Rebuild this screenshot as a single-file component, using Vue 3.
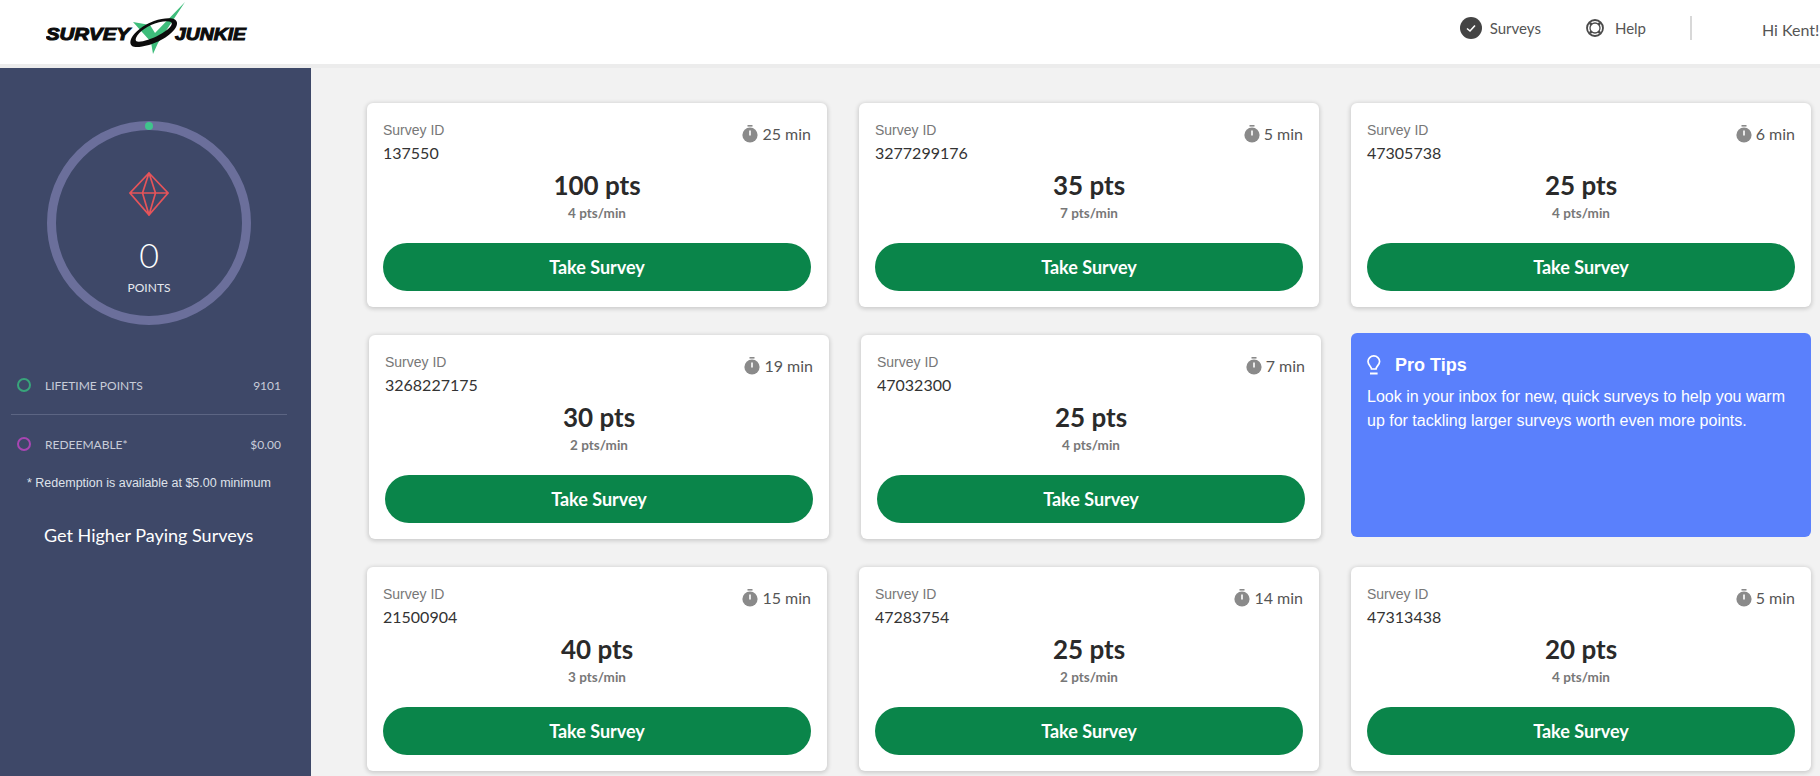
<script setup>
const surveys = [
  { id: '137550', time: 25, pts: 100, rate: 4 },
  { id: '3277299176', time: 5, pts: 35, rate: 7 },
  { id: '47305738', time: 6, pts: 25, rate: 4 },
  { id: '3268227175', time: 19, pts: 30, rate: 2, nudged: true },
  { id: '47032300', time: 7, pts: 25, rate: 4, nudged: true },
  { tip: true },
  { id: '21500904', time: 15, pts: 40, rate: 3 },
  { id: '47283754', time: 14, pts: 25, rate: 2 },
  { id: '47313438', time: 5, pts: 20, rate: 4 },
]
</script>

<template>
  <div class="page">
    <header class="topbar">
      <svg class="logo" width="204" height="56" viewBox="0 0 204 56">
        <path class="logo-check" d="M87 22 L104 25 L109 33 L139 2 L112 43 L107 54 L105 42 Z" />
        <path class="logo-swoosh" fill-rule="evenodd" d="M86 46 C80 40 92 27 108 21 C120 17 132 17 131 24 C130 32 116 41 103 45 C95 47 89 48 86 46 Z M90 41 C93 43 104 40 113 35 C122 30 128 25 125 22 C121 20 112 22 105 25 C96 29 88 37 90 41 Z" />
        <text class="logo-text" x="0" y="40" textLength="84" lengthAdjust="spacingAndGlyphs">SURVEY</text>
        <text class="logo-text" x="129" y="40" textLength="71" lengthAdjust="spacingAndGlyphs">JUNKIE</text>
      </svg>
      <nav class="nav">
        <a class="nav-item surveys-link">
          <svg width="22" height="22" viewBox="0 0 22 22">
            <circle cx="11" cy="11" r="11" fill="#444" />
            <path d="M7 11.5 L10 14 L15 8.5" fill="none" stroke="#fff" stroke-width="1.6" />
          </svg>
          Surveys
        </a>
        <a class="nav-item help-link">
          <svg width="18" height="18" viewBox="0 0 18 18">
            <circle cx="9" cy="9" r="8" fill="none" stroke="#4a4a4a" stroke-width="1.8" />
            <circle cx="9" cy="9" r="5" fill="none" stroke="#4a4a4a" stroke-width="1.3" />
            <path d="M3.8 3.8 L5.5 5.5 M14.2 3.8 L12.5 5.5 M3.8 14.2 L5.5 12.5 M14.2 14.2 L12.5 12.5" stroke="#4a4a4a" stroke-width="2.6" />
          </svg>
          Help
        </a>
        <span class="nav-sep"></span>
        <span class="greeting">Hi Kent!</span>
      </nav>
    </header>

    <div class="body">
      <aside class="sidebar">
        <div class="ring">
          <span class="ring-dot"></span>
          <svg class="gem" width="40" height="44" viewBox="0 0 40 44">
            <path d="M20 1 L39 21 L20 43 L1 21 Z M1 21 H39 M20 1 L13.5 21 L20 43 L26.5 21 Z" fill="none" stroke="#e5545a" stroke-width="1.7" />
          </svg>
          <div class="points-num">0</div>
          <div class="points-label">POINTS</div>
        </div>

        <div class="stat">
          <span class="stat-dot green"></span>
          <span class="stat-label">LIFETIME POINTS</span>
          <span class="stat-value">9101</span>
        </div>
        <div class="stat-sep"></div>
        <div class="stat">
          <span class="stat-dot purple"></span>
          <span class="stat-label">REDEEMABLE*</span>
          <span class="stat-value">$0.00</span>
        </div>
        <p class="note">* Redemption is available at $5.00 minimum</p>
        <p class="higher">Get Higher Paying Surveys</p>
      </aside>

      <main class="grid">
        <template v-for="s in surveys" :key="s.id || 'tip'">
          <section v-if="s.tip" class="tip">
            <h3 class="tip-title">
              <svg width="14" height="20" viewBox="0 0 14 20">
                <path d="M4.5 14 C4.5 11.5 1 10 1 6.5 A5.8 5.6 0 0 1 12.6 6.5 C12.6 10 9 11.5 9 14 Z" fill="none" stroke="#fff" stroke-width="1.7" />
                <path d="M3 18.5 H10.6" stroke="#fff" stroke-width="2" />
              </svg>
              Pro Tips
            </h3>
            <p class="tip-text">Look in your inbox for new, quick surveys to help you warm up for tackling larger surveys worth even more points.</p>
          </section>
          <section v-else class="card" :class="{ nudged: s.nudged }">
            <div class="card-top">
              <div>
                <div class="id-label">Survey ID</div>
                <div class="id-value">{{ s.id }}</div>
              </div>
              <div class="time">
                <svg width="16" height="18" viewBox="0 0 16 18">
                  <rect x="5.5" y="0" width="5" height="1.6" fill="#8a8a8a" />
                  <circle cx="8" cy="10" r="7.6" fill="#8a8a8a" />
                  <rect x="7.2" y="5.5" width="1.6" height="5" fill="#fff" />
                </svg>
                {{ s.time }} min
              </div>
            </div>
            <div class="pts">{{ s.pts }} pts</div>
            <div class="rate">{{ s.rate }} pts/min</div>
            <button class="take">Take Survey</button>
          </section>
        </template>
      </main>
    </div>
  </div>
</template>

<style>
html, body { margin: 0; overflow: hidden; }
</style>

<style scoped>
.page {
  height: 776px;
  overflow: hidden;
  background: #f2f2f2;
  font-family: Lato, "Liberation Sans", sans-serif;
  display: flex;
  flex-direction: column;
}
.topbar {
  height: 64px;
  flex: none;
  background: #fff;
  border-bottom: 4px solid #ececec;
  display: flex;
  align-items: flex-start;
  justify-content: space-between;
  padding-left: 46px;
  overflow: hidden;
}
.logo-check { fill: #3ebd7b; }
.logo-swoosh { fill: #0c0c0c; }
.logo-text {
  font-family: "Liberation Sans", sans-serif;
  font-weight: 700;
  font-style: italic;
  font-size: 17px;
  fill: #0c0c0c;
  stroke: #0c0c0c;
  stroke-width: 1;
}
.nav {
  display: flex;
  align-items: center;
  height: 56px;
  color: #555;
  font-size: 15px;
  white-space: nowrap;
}
.nav-item { display: flex; align-items: center; gap: 8px; }
.help-link { margin-left: 45px; gap: 11px; }
.nav-sep { width: 2px; height: 24px; background: #d8d8d8; margin-left: 44px; }
.greeting { margin-left: 70px; width: 58px; font-size: 16px; position: relative; top: 1px; }

.body { flex: 1; display: flex; min-height: 0; }
.sidebar {
  width: 311px;
  flex: none;
  background: #3e4868;
  color: #c8ccd8;
  padding: 53px 24px 0 11px;
  box-sizing: border-box;
  display: flex;
  flex-direction: column;
}
.ring {
  position: relative;
  width: 204px;
  height: 204px;
  margin: 0 0 0 36px;
  box-sizing: border-box;
  border: 9px solid #6b6f9b;
  border-radius: 50%;
  display: flex;
  flex-direction: column;
  align-items: center;
  padding-top: 42px;
  flex: none;
}
.ring-dot {
  position: absolute;
  top: -8px;
  left: 50%;
  width: 8px;
  height: 8px;
  margin-left: -4px;
  border-radius: 50%;
  background: #3fc48c;
}
.gem { display: block; }
.points-num {
  margin-top: 19px;
  font-size: 34px;
  font-weight: 300;
  line-height: 40px;
  color: #fff;
}
.points-label { margin-top: 5px; font-size: 12px; line-height: 16px; color: #e6e8ef; }

.stat {
  display: flex;
  align-items: center;
  height: 20px;
  width: 276px;
  box-sizing: border-box;
  padding: 0 6px 0 6px;
  font-size: 12px;
}
.ring + .stat { margin-top: 50px; }
.stat-dot {
  width: 14px;
  height: 14px;
  box-sizing: border-box;
  border: 2px solid;
  border-radius: 50%;
  margin-right: 14px;
}
.stat-dot.green { border-color: #38a57b; }
.stat-dot.purple { border-color: #a846b3; }
.stat-label { flex: 1; }
.stat-sep { width: 276px; height: 1px; background: #5c6583; margin: 19px 0; }
.note {
  margin: 21px 0 0 16px;
  font-family: "Liberation Sans", sans-serif;
  font-size: 12.5px;
  line-height: 16px;
  color: #dfe2ea;
  white-space: nowrap;
}
.higher {
  margin: 32px 0 0 33px;
  font-size: 18px;
  line-height: 24px;
  color: #fff;
  white-space: nowrap;
}

.grid {
  display: grid;
  grid-template-columns: repeat(3, 460px);
  grid-auto-rows: 204px;
  gap: 28px 32px;
  padding: 35px 0 0 56px;
}
.card, .tip {
  border-radius: 6px;
  box-sizing: border-box;
  padding: 0 16px;
}
.card {
  background: #fff;
  box-shadow: 0 1px 4px 1px rgba(0, 0, 0, 0.16);
  display: flex;
  flex-direction: column;
}
.nudged { transform: translateX(2px); }
.card-top { display: flex; justify-content: space-between; align-items: flex-start; padding-top: 18px; height: 45px; }
.id-label { font-family: "Liberation Sans", sans-serif; font-size: 14px; line-height: 18px; color: #777; }
.id-value { font-size: 16px; line-height: 20px; margin-top: 4px; color: #333; }
.time { display: flex; align-items: center; gap: 4px; font-size: 16px; color: #555; margin-top: 3px; }
.pts { margin-top: 4px; text-align: center; font-size: 26px; font-weight: 700; line-height: 30px; color: #2a2a2a; }
.rate { margin-top: 5px; text-align: center; font-size: 13.5px; font-weight: 700; line-height: 16px; color: #777; }
.take {
  margin-top: 22px;
  height: 48px;
  border: none;
  border-radius: 24px;
  background: #0a854a;
  color: #fff;
  font-family: Lato, sans-serif;
  font-size: 18px;
  font-weight: 700;
}
.tip {
  background: #5a80fc;
  color: #fff;
  padding-top: 21px;
  font-family: "Liberation Sans", sans-serif;
  transform: translateY(-2px);
}
.tip-title { display: flex; align-items: center; gap: 14px; margin: 0; font-size: 18px; font-weight: 700; line-height: 22px; }
.tip-text { margin: 9px 0 0; font-size: 16px; line-height: 24px; }
</style>
